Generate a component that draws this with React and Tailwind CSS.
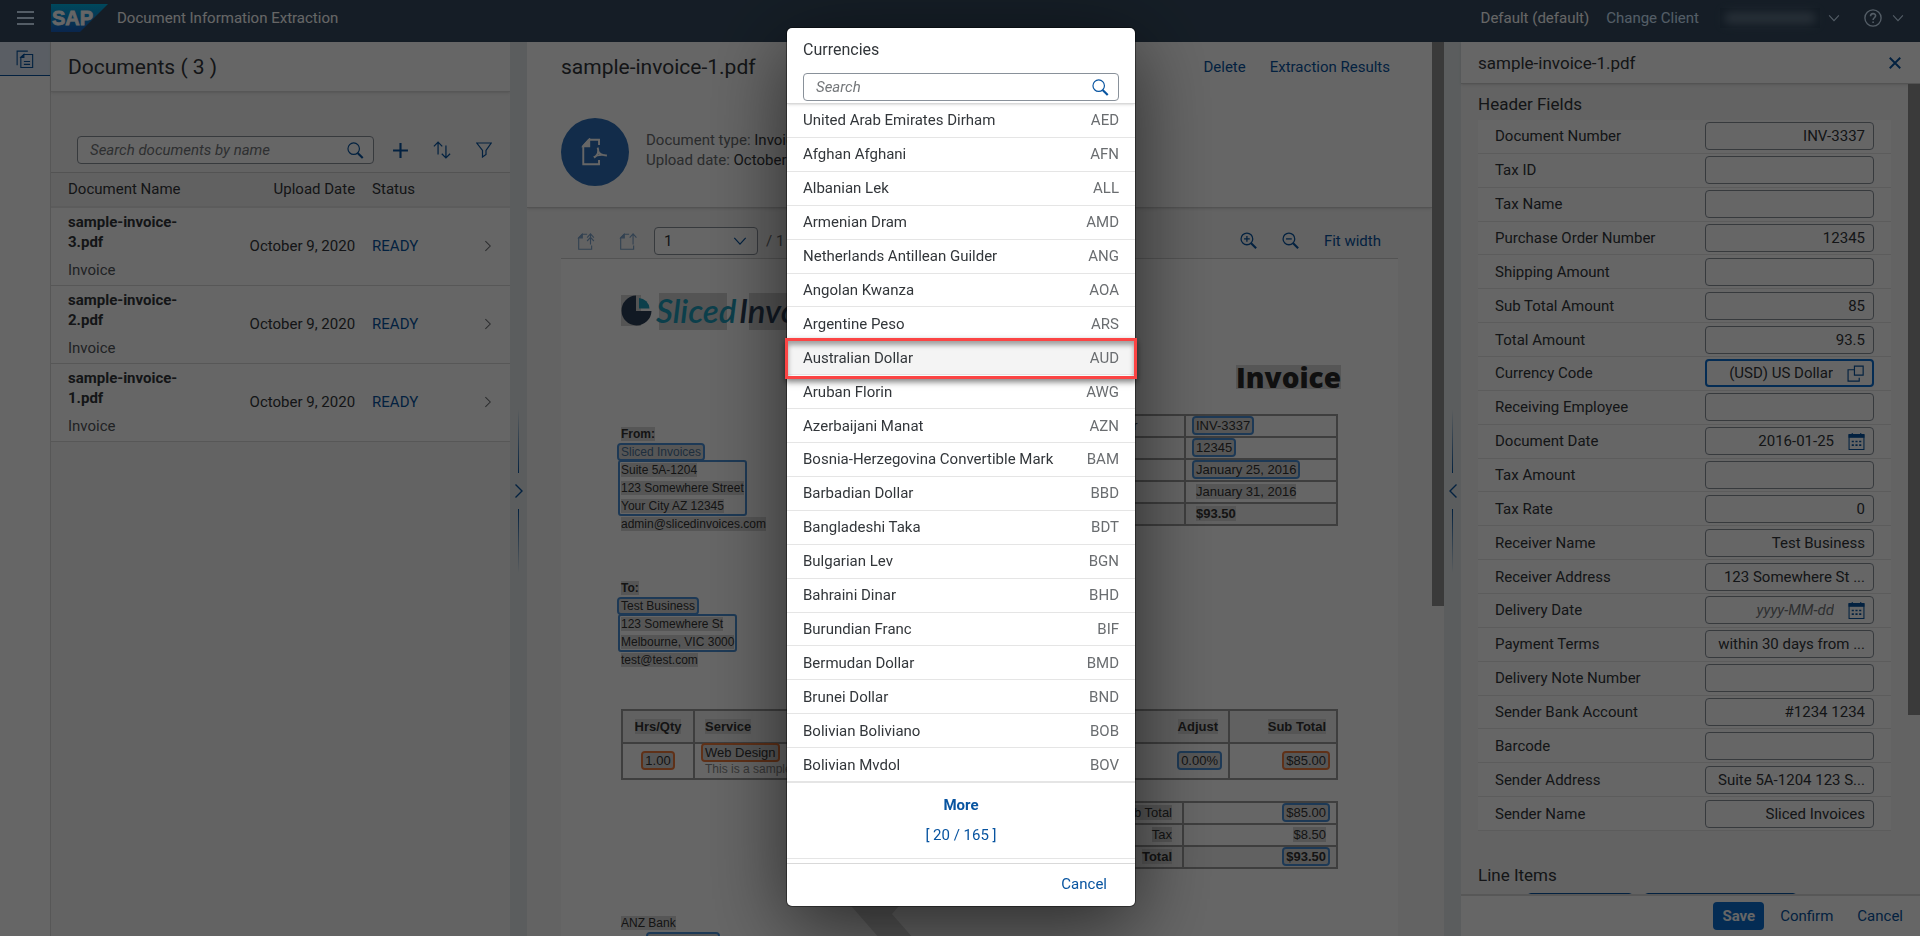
import React from "react";

const currencies = [
  ["United Arab Emirates Dirham", "AED"],
  ["Afghan Afghani", "AFN"],
  ["Albanian Lek", "ALL"],
  ["Armenian Dram", "AMD"],
  ["Netherlands Antillean Guilder", "ANG"],
  ["Angolan Kwanza", "AOA"],
  ["Argentine Peso", "ARS"],
  ["Australian Dollar", "AUD"],
  ["Aruban Florin", "AWG"],
  ["Azerbaijani Manat", "AZN"],
  ["Bosnia-Herzegovina Convertible Mark", "BAM"],
  ["Barbadian Dollar", "BBD"],
  ["Bangladeshi Taka", "BDT"],
  ["Bulgarian Lev", "BGN"],
  ["Bahraini Dinar", "BHD"],
  ["Burundian Franc", "BIF"],
  ["Bermudan Dollar", "BMD"],
  ["Brunei Dollar", "BND"],
  ["Bolivian Boliviano", "BOB"],
  ["Bolivian Mvdol", "BOV"],
];

const headerFields = [
  { label: "Document Number", value: "INV-3337" },
  { label: "Tax ID", value: "" },
  { label: "Tax Name", value: "" },
  { label: "Purchase Order Number", value: "12345" },
  { label: "Shipping Amount", value: "" },
  { label: "Sub Total Amount", value: "85" },
  { label: "Total Amount", value: "93.5" },
  { label: "Currency Code", value: "(USD) US Dollar", kind: "help" },
  { label: "Receiving Employee", value: "" },
  { label: "Document Date", value: "2016-01-25", kind: "date" },
  { label: "Tax Amount", value: "" },
  { label: "Tax Rate", value: "0" },
  { label: "Receiver Name", value: "Test Business" },
  { label: "Receiver Address", value: "123 Somewhere St ..." },
  { label: "Delivery Date", value: "", kind: "date" },
  { label: "Payment Terms", value: "within 30 days from ..." },
  { label: "Delivery Note Number", value: "" },
  { label: "Sender Bank Account", value: "#1234 1234" },
  { label: "Barcode", value: "" },
  { label: "Sender Address", value: "Suite 5A-1204 123 S..." },
  { label: "Sender Name", value: "Sliced Invoices" },
];

function Icon({ size = 17, className = "", width = 1.2, children }) {
  return (
    <svg
      width={size}
      height={size}
      viewBox="0 0 16 16"
      fill="none"
      stroke="currentColor"
      strokeWidth={width}
      className={"shrink-0 " + className}
      aria-hidden="true"
    >
      {children}
    </svg>
  );
}

const SearchIcon = () => (
  <Icon width={1.1}>
    <circle cx="6.3" cy="6.3" r="5.400" />
    <path d="M10 10.300l4.800 4.800" strokeWidth="2" />
  </Icon>
);

const Chevron = ({ d, size = 12, className }) => (
  <Icon size={size} className={className} width={1.4}>
    <path d={d} />
  </Icon>
);
const DOWN = "M1.5 4.5L8 11.5l6.5-7";
const RIGHT = "M4.5 1.5L11 8l-6.5 6.5";
const LEFT = "M11.5 1.5L5 8l6.5 6.5";

const CalendarIcon = () => (
  <Icon width={1}>
    <path d="M1 2h14v13.500H1z" />
    <path d="M1 1.500h14V4H1z" fill="currentColor" />
    <path d="M4 0v2M12 0v2" />
    <path d="M3.500 8h2M7 8h2M10.500 8h2M3.500 11.500h2M7 11.500h2M10.500 11.500h2" strokeWidth="1.600" />
  </Icon>
);

function SapLogo() {
  return (
    <svg width="57" height="28" viewBox="0 0 57 28" role="img" aria-label="SAP">
      <defs>
        <linearGradient id="sap" x1="0" y1="0" x2="0" y2="1">
          <stop offset="0" stopColor="#00b4e6" />
          <stop offset="1" stopColor="#1b5fc0" />
        </linearGradient>
      </defs>
      <path d="M0 0h57L29 28H0z" fill="url(#sap)" />
      <text
        x="1"
        y="21"
        fontFamily="Liberation Sans, sans-serif"
        fontWeight="700"
        fontSize="20"
        fill="#fff"
        stroke="#fff"
        strokeWidth="0.800"
      >
        SAP
      </text>
    </svg>
  );
}

function ShellHeader() {
  return (
    <header className="flex h-[42px] shrink-0 items-center bg-[#354a5f] pb-1.5 pl-[17px] pr-4 text-[15px] leading-5 text-white">
      <button aria-label="Menu" className="flex h-7 w-[17px] flex-col justify-center gap-[4px]">
        <span className="h-[2px] w-full bg-[#d1e8ff]" />
        <span className="h-[2px] w-full bg-[#d1e8ff]" />
        <span className="h-[2px] w-full bg-[#d1e8ff]" />
      </button>
      <div className="ml-[17px]">
        <SapLogo />
      </div>
      <h1 className="ml-[9px]">Document Information Extraction</h1>
      <div className="ml-auto flex items-center">
        <span>Default (default)</span>
        <button className="ml-[17px] text-[#d1e8ff]">Change Client</button>
        <button aria-label="User" className="ml-[21px] flex items-center gap-2 text-[#d1e8ff]">
          <span className="h-5 w-[100px] bg-[#2e4358] px-1 py-1">
            <span className="block h-3 rounded-full bg-[#64788c] blur-[5px]" />
          </span>
          <Chevron d={DOWN} />
        </button>
        <button aria-label="Help" className="ml-6 flex items-center gap-[10px] text-[#d1e8ff]">
          <Icon size={18}>
            <circle cx="8" cy="8" r="7.200" />
            <path d="M5.800 6.400c0-3 4.500-3 4.500-.3 0 1.700-2.200 1.700-2.200 3.600M8.100 11v1.500" strokeWidth="1.400" />
          </Icon>
          <Chevron d={DOWN} />
        </button>
      </div>
    </header>
  );
}

function SideNav() {
  return (
    <nav className="w-[51px] shrink-0 border-r border-[#d9d9d9] bg-white">
      <a
        href="#documents"
        aria-label="Documents"
        className="flex h-[34px] items-center justify-center border-b border-[#0854a0] bg-[#e0ecf9] text-[#0854a0]"
      >
        <Icon size={18} width={1}>
          <path d="M10.500 1H1v12.500" />
          <path d="M7 4h7.800v11.500H4.300V6.500z" />
          <path d="M4.300 6.500L7 4v2.500z" fill="currentColor" />
          <path d="M7 10.200h5.500M7 12.800h5.500" />
        </Icon>
      </a>
    </nav>
  );
}

function DocumentList() {
  return (
    <section className="flex min-w-0 flex-col bg-[#f7f7f7] text-[15px] text-[#32363a]">
      <div className="flex h-[50px] items-center border-b border-[#d9d9d9] bg-white px-[17px] shadow-sm">
        <h2 className="text-[21px] leading-7">Documents ( 3 )</h2>
      </div>
      <div className="flex items-center gap-[13px] pb-2 pl-[26px] pr-[13px] pt-11 text-[#0854a0]">
        <div className="flex h-7 min-w-0 flex-1 items-center rounded-sm border border-[#89919a] bg-white pl-[12px] pr-[9px]">
          <input
            type="search"
            aria-label="Search documents by name"
            placeholder="Search documents by name"
            className="min-w-0 flex-1 bg-transparent outline-none placeholder:italic placeholder:text-[#74777a]"
          />
          <button aria-label="Search">
            <SearchIcon />
          </button>
        </div>
        <div className="flex gap-4">
          <button aria-label="Add" className="flex w-[26px] items-center justify-center">
            <Icon width={2}>
              <path d="M8 1v14M1 8h14" />
            </Icon>
          </button>
          <button aria-label="Sort" className="flex w-[26px] items-center justify-center">
            <Icon size={18} width={1.100}>
              <path d="M4.500 12V1M.8 4.800L4.500 1l3.700 3.800M11.500 4v11M7.800 11.300l3.700 3.700 3.700-3.700" />
            </Icon>
          </button>
          <button aria-label="Filter" className="flex w-[26px] items-center justify-center">
            <Icon size={16}>
              <path d="M.8 1h14.400L10 8.500v4L6.500 15V8.500z" />
            </Icon>
          </button>
        </div>
      </div>
      <table className="w-full table-fixed border-collapse leading-5">
        <thead>
          <tr className="h-[34px] border-b-2 border-t border-b-[#e5e5e5] border-t-[#d0d0d0] bg-[#f2f2f2] text-left">
            <th className="w-[34%] pl-[17px] font-normal">Document Name</th>
            <th className="w-[34%] pr-2 text-right font-normal">Upload Date</th>
            <th className="pl-[9px] font-normal">Status</th>
            <th className="w-9" aria-label="Open" />
          </tr>
        </thead>
        <tbody>
          {["3", "2", "1"].map((n) => (
            <tr key={n} className="h-[78px] border-b border-[#d9d9d9] bg-white">
              <td className="pb-[5px] pl-[17px] pr-2 pt-1">
                <span className="block font-bold">sample-invoice-{n}.pdf</span>
                <span className="mt-2 block text-[#51555a]">Invoice</span>
              </td>
              <td className="pr-2 text-right">October 9, 2020</td>
              <td className="pl-[9px] text-[#0854a0]">READY</td>
              <td className="pl-2 text-[#6a6d70]">
                <Chevron d={RIGHT} />
              </td>
            </tr>
          ))}
        </tbody>
      </table>
    </section>
  );
}

function Splitter({ direction }) {
  return (
    <div className="flex flex-col items-center justify-center gap-2.5 bg-[#e3e9eb] pt-[3px] text-[#0854a0]">
      <span className="h-[64px] w-px bg-linear-to-t from-[#0854a0] to-transparent" />
      <button aria-label={direction === "left" ? "Expand right column" : "Expand left column"}>
        <Chevron size={16} d={direction === "left" ? LEFT : RIGHT} className="block" />
      </button>
      <span className="h-[64px] w-px bg-linear-to-b from-[#0854a0] to-transparent" />
    </div>
  );
}

const Mark = ({ children, className = "" }) => (
  <span className={"bg-[#d8d8d8] " + className}>{children}</span>
);
const Box = ({ children, className = "" }) => (
  <Mark className={"-mx-0.5 rounded-[2px] px-0.5 outline-2 outline-[#4a90d6] " + className}>
    {children}
  </Mark>
);
const OrangeBox = ({ children, className = "" }) => (
  <Mark className={"-mx-0.5 rounded-[2px] px-0.5 outline-2 outline-[#ee7a3c] " + className}>
    {children}
  </Mark>
);
const BlockBox = ({ children }) => (
  <div className="-mx-0.5 w-fit rounded-[2px] px-0.5 outline-2 -outline-offset-1 outline-[#4a90d6]">
    {children}
  </div>
);

function CompanyLogo() {
  return (
    <svg width="200" height="37" viewBox="0 0 200 37" role="img" aria-label="Sliced Invoices">
      <path d="M0 2h20v31H0zM38 0h68v37H38zM128 0h72v37h-72z" fill="#d2d2d2" />
      <path d="M15 2.500a15 15 0 1 0 15.500 15.500H15z" fill="#2b3f58" />
      <path d="M18 5v10.500h10.500A11 11 0 0 0 18 5z" fill="#1f9dbb" />
      <g fontFamily="Lato, sans-serif" fontStyle="italic" fontWeight="600" fontSize="33">
        <text x="35" y="30" fill="#1f9dbb">Sliced</text>
        <text x="118" y="30" fill="#2b3f58">Invoices</text>
      </g>
    </svg>
  );
}

function InvoicePage() {
  const cell = "border-2 border-[#9c9c9c] ";
  return (
    <article
      className="relative mx-[34px] overflow-hidden border-t border-[#d0d0d0] bg-white px-[60px] pt-[34px] text-[13px] leading-[18px] text-[#333]"
      style={{ fontFamily: '"Liberation Sans", Arial, sans-serif' }}
    >
      <svg width="70" height="40" viewBox="0 0 70 40" className="absolute left-[284px] top-[640px]" aria-hidden="true">
        <path d="M0 0h60l-13 15 22 25H35z" fill="#d8d8d8" />
      </svg>
      <CompanyLogo />
      <div className="-mr-[3px] mt-[35px] flex justify-end">
        <span
          className="bg-[#d8d8d8] text-[28px] font-extrabold leading-6 text-[#2a2a2a]"
          style={{ fontFamily: '"Open Sans", sans-serif' }}
        >
          Invoice
        </span>
      </div>
      <div className="mt-[25px] flex items-start justify-between">
        <div className="pt-[11px] text-[12px]">
          <p>
            <Mark className="font-bold">From:</Mark>
          </p>
          <p>
            <Box className="text-[#4d7398]">Sliced Invoices</Box>
          </p>
          <BlockBox>
            <p><Mark>Suite 5A-1204</Mark></p>
            <p><Mark>123 Somewhere Street</Mark></p>
            <p><Mark>Your City AZ 12345</Mark></p>
          </BlockBox>
          <p><Mark>admin@slicedinvoices.com</Mark></p>
        </div>
        <table className="h-[112px] w-[50%] border-collapse">
          <tbody>
            {[
              ["Invoice Number", <Box>INV-3337</Box>],
              ["Order Number", <Box>12345</Box>],
              ["Invoice Date", <Box>January 25, 2016</Box>],
              ["Due Date", <Mark>January 31, 2016</Mark>],
              ["Total Due", <Mark className="font-bold">$93.50</Mark>],
            ].map(([label, value], i) => (
              <tr key={label} className={i === 4 ? "bg-[#f2f2f2]" : ""}>
                <td className={cell + "pl-[65px]"}>{label}</td>
                <td className={cell + "w-[152px] pl-2.5"}>{value}</td>
              </tr>
            ))}
          </tbody>
        </table>
      </div>
      <div className="mt-[46px] text-[12px]">
        <p><Mark className="font-bold">To:</Mark></p>
        <p><Box>Test Business</Box></p>
        <BlockBox>
          <p><Mark>123 Somewhere St</Mark></p>
          <p><Mark>Melbourne, VIC 3000</Mark></p>
        </BlockBox>
        <p><Mark>test@test.com</Mark></p>
      </div>
      <table className="mt-10 w-full border-collapse">
        <thead>
          <tr className="h-[33px] bg-[#f2f2f2]">
            <th className={cell + "w-[72px]"}><Mark>Hrs/Qty</Mark></th>
            <th className={cell + "pl-2.5 text-left"}><Mark>Service</Mark></th>
            <th className={cell + "w-[210px] pr-2.5 text-right"}><Mark>Adjust</Mark></th>
            <th className={cell + "w-[108px] pr-2.5 text-right"}><Mark>Sub Total</Mark></th>
          </tr>
        </thead>
        <tbody>
          <tr className="h-[36px]">
            <td className={cell + "text-center"}><OrangeBox>1.00</OrangeBox></td>
            <td className={cell + "pl-2.5 leading-4"}>
              <OrangeBox>Web Design</OrangeBox>
              <span className="block text-[12px] leading-4 text-[#8a8a8a]">This is a sample</span>
            </td>
            <td className={cell + "pr-2.5 text-right"}><Box>0.00%</Box></td>
            <td className={cell + "pr-2.5 text-right"}><OrangeBox>$85.00</OrangeBox></td>
          </tr>
        </tbody>
      </table>
      <table className="ml-auto mt-[21px] w-[265px] border-collapse text-right">
        <tbody>
          <tr className="h-[22px]">
            <td className={cell + "pr-2.5"}><Mark>Sub Total</Mark></td>
            <td className={cell + "w-[154px] pr-2.5"}><Box>$85.00</Box></td>
          </tr>
          <tr className="h-[22px]">
            <td className={cell + "pr-2.5"}><Mark>Tax</Mark></td>
            <td className={cell + "pr-2.5"}><Mark>$8.50</Mark></td>
          </tr>
          <tr className="h-[22px] bg-[#f2f2f2] font-bold">
            <td className={cell + "pr-2.5"}><Mark>Total</Mark></td>
            <td className={cell + "pr-2.5"}><Box>$93.50</Box></td>
          </tr>
        </tbody>
      </table>
      <div className="mt-[45px] text-[12px]">
        <p><Mark>ANZ Bank</Mark></p>
        <p className="text-[#777]">
          ACC <Box># 1234 1234</Box>
        </p>
      </div>
    </article>
  );
}

function DocumentView() {
  return (
    <section className="flex min-h-0 min-w-0 overflow-hidden bg-[#f7f7f7] text-[15px] leading-5 text-[#32363a]">
      <div className="min-w-0 flex-1">
        <div className="h-[166px] border-b border-[#d0d0d0] bg-white pl-[34px] pr-[42px] pt-[11px] shadow-sm">
          <div className="flex items-center">
            <h2 className="text-[21px] leading-7">sample-invoice-1.pdf</h2>
            <div className="ml-auto flex gap-6 text-[#0854a0]">
              <button>Delete</button>
              <button>Extraction Results</button>
            </div>
          </div>
          <div className="mt-[37px] flex items-center gap-[17px]">
            <span className="flex size-[68px] items-center justify-center rounded-full bg-[#2d6fb8] text-white">
              <Icon size={28} width={1.1}>
                <path d="M10.300 4V1H4.500L1.300 4.500V15h9v-2.500" />
                <path d="M1.300 4.800h3.400V1z" fill="currentColor" />
                <path d="M9.500 5.500c.8 1.800.3 4-2 5.800M9.800 7.500c.5 1.500 2 2.400 5 2.500M7.300 11c1.500-1.200 3.500-1.600 6.500-1.200" />
              </Icon>
            </span>
            <div className="pb-1">
              <p><span className="text-[#6a6d70]">Document type: </span>Invoice</p>
              <p><span className="text-[#6a6d70]">Upload date: </span>October 9, 2020</p>
            </div>
          </div>
        </div>
        <div className="flex h-[50px] items-center pb-[1px] pl-[50px] pr-[51px] pt-4 text-[#0854a0]">
          <button aria-label="First page" className="opacity-50" disabled>
            <Icon size={18} width={1}>
              <path d="M9 2H4.500L1.500 5v10.300H13V12" />
              <path d="M1.500 5.200h3.200V2z" fill="currentColor" />
              <path d="M12 11V1.500M9 5l3-3.300L15 5M9 8l3-3.300L15 8" />
            </Icon>
          </button>
          <button aria-label="Previous page" className="ml-6 opacity-50" disabled>
            <Icon size={18} width={1}>
              <path d="M9 2H4.500L1.500 5v10.300H13V12" />
              <path d="M1.500 5.200h3.200V2z" fill="currentColor" />
              <path d="M12.500 11V1.500M9.500 5l3-3.300 3 3.300" />
            </Icon>
          </button>
          <div className="relative ml-[17px] flex items-center">
            <select
              aria-label="Page"
              className="h-7 w-[104px] appearance-none rounded-sm border border-[#89919a] bg-white pl-[9px] text-[#32363a]"
            >
              <option>1</option>
            </select>
            <Chevron d={DOWN} size={14} className="pointer-events-none absolute right-[11px]" />
          </div>
          <span className="ml-2 text-[#6a6d70]">/ 1</span>
          <div className="ml-auto flex items-center gap-[25px]">
            <button aria-label="Zoom in">
              <Icon>
                <circle cx="6.500" cy="6.500" r="5.500" />
                <path d="M6.500 3.800v5.400M3.800 6.500h5.400" />
                <path d="M10.500 10.500l4.700 4.700" strokeWidth="2" />
              </Icon>
            </button>
            <button aria-label="Zoom out">
              <Icon>
                <circle cx="6.500" cy="6.500" r="5.500" />
                <path d="M3.800 6.500h5.400" />
                <path d="M10.500 10.500l4.700 4.700" strokeWidth="2" />
              </Icon>
            </button>
            <button>Fit width</button>
          </div>
        </div>
        <InvoicePage />
      </div>
      <div className="w-3 shrink-0">
        <div className="h-[564px] bg-[#919191]" />
      </div>
    </section>
  );
}

function FieldRow({ label, value, kind }) {
  const id = label.toLowerCase().replaceAll(" ", "-");
  return (
    <div className="flex items-center border-b border-[#e5e5e5] bg-white px-[17px]">
      <label htmlFor={id} className="min-w-0 flex-1">{label}</label>
      <div
        className={
          kind === "help"
            ? "flex h-7 w-[169px] items-center gap-[14px] rounded-sm border-2 border-[#0a6ed1] bg-white px-2 text-[#0854a0]"
            : "flex h-7 w-[169px] items-center gap-[14px] rounded-sm border border-[#89919a] bg-white px-2 text-[#0854a0]"
        }
      >
        <input
          id={id}
          defaultValue={value}
          placeholder={kind === "date" ? "yyyy-MM-dd" : ""}
          className="w-full min-w-0 flex-1 bg-transparent text-right text-[#32363a] outline-none placeholder:italic placeholder:text-[#74777a]"
        />
        {kind === "help" && (
          <button aria-label="Choose currency">
            <Icon width={1.100}>
              <path d="M7 1h8.200v8.500H7z" />
              <path d="M7 4.500H1v10.700h10.500V12" />
            </Icon>
          </button>
        )}
        {kind === "date" && (
          <button aria-label={"Pick " + label}>
            <CalendarIcon />
          </button>
        )}
      </div>
    </div>
  );
}

function FieldsPanel() {
  return (
    <section className="flex min-h-0 min-w-0 flex-col bg-[#f7f7f7] text-[15px] leading-5 text-[#32363a]">
      <div className="flex h-[42px] shrink-0 items-center justify-between border-b border-[#d0d0d0] bg-white pl-[17px] pr-[18px] shadow-sm">
        <h2 className="text-[17px]">sample-invoice-1.pdf</h2>
        <button aria-label="Close" className="text-[#0854a0]">
          <Icon size={14} width={2.200}>
            <path d="M2 2l12 12M14 2L2 14" />
          </Icon>
        </button>
      </div>
      <div className="flex min-h-0 flex-1 overflow-hidden">
        <div className="min-w-0 flex-1 px-[17px] pt-2.5">
          <h3 className="text-[17px]">Header Fields</h3>
          <div className="mt-1.5 grid h-[711px] auto-rows-fr">
            {headerFields.map((f) => (
              <FieldRow key={f.label} {...f} />
            ))}
          </div>
          <h3 className="mt-[34px] text-[17px]">Line Items</h3>
          <div className="ml-[49px] mt-2 flex gap-[11px] text-[#0854a0]">
            <button aria-label="Annotate" className="h-7 w-[106px] rounded-sm border border-[#0854a0] bg-white" />
            <button aria-label="Add line item" className="h-7 w-[153px] rounded-sm border border-[#0854a0] bg-white" />
          </div>
        </div>
        <div className="w-3 shrink-0">
          <div className="h-[631px] bg-[#919191]" />
        </div>
      </div>
      <div className="flex h-[42px] shrink-0 items-center justify-end border-t-2 border-[#d9d9d9] bg-white pr-[17px] text-[#0854a0]">
        <button className="h-7 rounded bg-[#0a6ed1] px-[9px] font-bold text-white">Save</button>
        <button className="ml-4">Confirm</button>
        <button className="ml-6">Cancel</button>
      </div>
    </section>
  );
}

function CurrencyDialog() {
  return (
    <div className="fixed inset-0 flex items-center justify-center bg-black/60 pb-0.5 pl-0.5">
      <div
        role="dialog"
        aria-label="Currencies"
        className="w-[348px] rounded-[5px] bg-white text-[15px] leading-5 text-[#32363a] shadow-[0_0_0_1px_rgba(0,0,0,0.4),0_20px_80px_0_rgba(0,0,0,0.6)]"
      >
        <div className="border-b border-[#d9d9d9] px-4 pb-0.5 pt-3 shadow-sm">
          <h2 className="text-[16px] leading-5">Currencies</h2>
          <div className="mt-[13px] flex h-7 items-center rounded-sm border border-[#89919a] bg-white pl-3 pr-[9px] text-[#0854a0]">
            <input
              type="search"
              aria-label="Search currencies"
              placeholder="Search"
              className="min-w-0 flex-1 bg-transparent outline-none placeholder:italic placeholder:text-[#74777a]"
            />
            <button aria-label="Search">
              <SearchIcon />
            </button>
          </div>
        </div>
        <ul className="grid h-[678px] auto-rows-fr">
          {currencies.map(([name, code]) => (
            <li key={code} className="relative border-b border-[#e5e5e5]">
              <button
                className={
                  code === "AUD"
                    ? "flex size-full items-center justify-between bg-[#f4f4f4] px-4"
                    : "flex size-full items-center justify-between px-4"
                }
              >
                <span>{name}</span>
                <span className="text-[#6a6d70]">{code}</span>
              </button>
              {code === "AUD" && (
                <span className="pointer-events-none absolute -inset-x-[2px] -bottom-[5px] -top-[3px] z-10 border-[3px] border-[#fb4444] shadow-[0_3px_6px_rgba(0,0,0,0.5),inset_0_4px_5px_rgba(0,0,0,0.35)]" />
              )}
            </li>
          ))}
        </ul>
        <button className="flex h-[77px] w-full flex-col items-center justify-center gap-[10px] border-b border-t border-[#e5e5e5] pb-0.5 text-[#0854a0]">
          <span className="font-bold">More</span>
          <span>[ 20 / 165 ]</span>
        </button>
        <div className="mt-1 flex h-[43px] items-center justify-end border-t border-[#d9d9d9] pb-0.5 pr-[28px] text-[#0854a0]">
          <button>Cancel</button>
        </div>
      </div>
    </div>
  );
}

export default function App() {
  return (
    <div
      className="flex h-screen flex-col overflow-hidden bg-[#edeff0]"
      style={{ fontFamily: 'Roboto, "Noto Sans", sans-serif' }}
    >
      <ShellHeader />
      <div className="flex min-h-0 flex-1">
        <SideNav />
        <main className="grid min-h-0 min-w-0 flex-1 grid-cols-[minmax(0,459fr)_17px_minmax(0,917fr)_17px_minmax(0,459fr)] grid-rows-[minmax(0,1fr)]">
          <DocumentList />
          <Splitter direction="right" />
          <DocumentView />
          <Splitter direction="left" />
          <FieldsPanel />
        </main>
      </div>
      <CurrencyDialog />
    </div>
  );
}
